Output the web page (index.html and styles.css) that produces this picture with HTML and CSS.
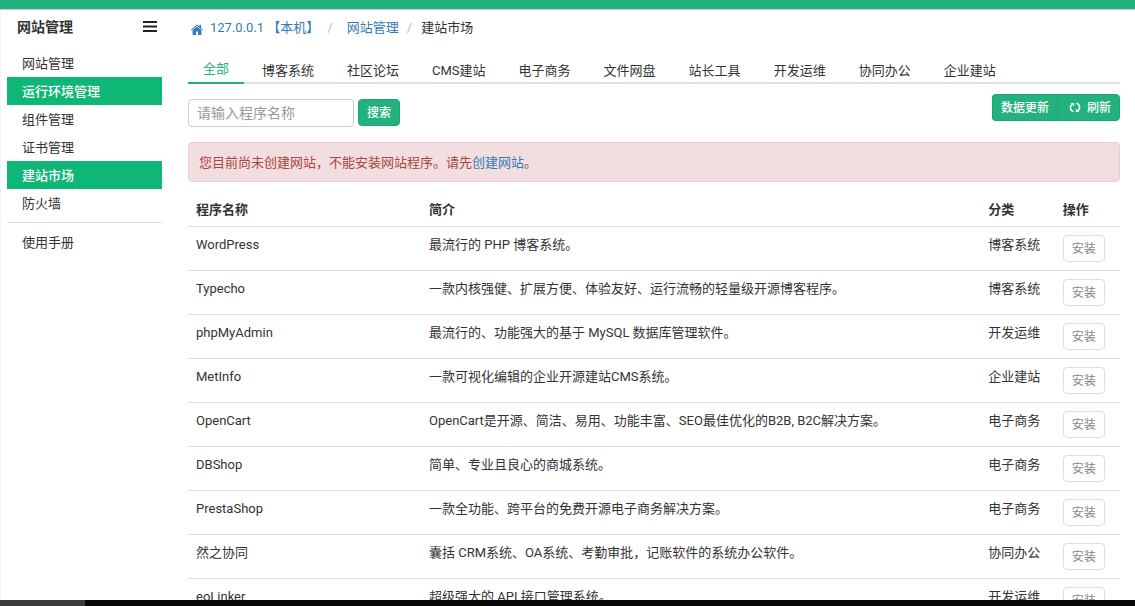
FILE: index.html
```
<!DOCTYPE html>
<html lang="zh-CN">
<head>
<meta charset="utf-8">
<title>建站市场</title>
<link rel="stylesheet" href="styles.css">
</head>
<body>
<div class="topbar"></div>
<div class="layout">
  <aside class="sidebar">
    <div class="side-head">
      <h1 class="side-title">网站管理</h1>
      <button class="menu-toggle" type="button" aria-label="菜单">
        <svg width="14" height="11" viewBox="0 0 14 11"><path d="M0 0h14v2H0zM0 4.5h14v2H0zM0 9h14v2H0z" fill="#222"/></svg>
      </button>
    </div>
    <nav class="side-nav">
      <a class="side-link" href="#">网站管理</a>
      <a class="side-link active" href="#">运行环境管理</a>
      <a class="side-link" href="#">组件管理</a>
      <a class="side-link" href="#">证书管理</a>
      <a class="side-link active" href="#">建站市场</a>
      <a class="side-link" href="#">防火墙</a>
      <hr class="side-line">
      <a class="side-link" href="#">使用手册</a>
    </nav>
  </aside>
  <main class="main">
    <nav class="breadcrumb">
      <a class="crumb-home" href="#"><svg width="12" height="11" viewBox="0 0 12 11"><path d="M6 .4 0 5.800l.6.7L6 1.700l5.400 4.800.6-.7-2-1.800V.8H8.400v1.800z" fill="#337ab7"/><path d="M6 2.400 1.600 6.300V11H5V7.600h2V11h3.400V6.300z" fill="#337ab7"/></svg>127.0.0.1 【本机】</a>
      <span class="sep">/</span>
      <a class="crumb" href="#">网站管理</a>
      <span class="sep">/</span>
      <span>建站市场</span>
    </nav>
    <nav class="tabs">
      <a class="tab active" href="#">全部</a>
      <a class="tab" href="#">博客系统</a>
      <a class="tab" href="#">社区论坛</a>
      <a class="tab" href="#">CMS建站</a>
      <a class="tab" href="#">电子商务</a>
      <a class="tab" href="#">文件网盘</a>
      <a class="tab" href="#">站长工具</a>
      <a class="tab" href="#">开发运维</a>
      <a class="tab" href="#">协同办公</a>
      <a class="tab" href="#">企业建站</a>
    </nav>
    <div class="toolbar">
      <form class="search">
        <input class="search-input" type="text" placeholder="请输入程序名称" aria-label="程序名称">
        <button class="btn" type="button">搜索</button>
      </form>
      <div class="btn-group">
        <button class="btn" type="button">数据更新</button>
        <button class="btn" type="button"><svg width="12" height="11" viewBox="0 0 12 11" fill="none" stroke="#fff" stroke-width="1.6"><path d="M4.600 9.700C1 8.800.4 4.400 3 2.400"/><path d="M7.400 1.300c3.600.9 4.200 5.300 1.600 7.300"/><path d="M1.600 1h3.600v3.400zM10.400 10H6.800V6.600z" fill="#fff" stroke="none"/></svg>刷新</button>
      </div>
    </div>
    <div class="alert">您目前尚未创建网站，不能安装网站程序。请先<a href="#">创建网站</a>。</div>
    <table class="apps">
      <thead>
        <tr><th class="c-name">程序名称</th><th class="c-desc">简介</th><th class="c-type">分类</th><th class="c-act">操作</th></tr>
      </thead>
      <tbody>
        <tr><td>WordPress</td><td>最流行的 PHP 博客系统。</td><td>博客系统</td><td class="act"><button class="install" type="button">安装</button></td></tr>
        <tr><td>Typecho</td><td>一款内核强健、扩展方便、体验友好、运行流畅的轻量级开源博客程序。</td><td>博客系统</td><td class="act"><button class="install" type="button">安装</button></td></tr>
        <tr><td>phpMyAdmin</td><td>最流行的、功能强大的基于 MySQL 数据库管理软件。</td><td>开发运维</td><td class="act"><button class="install" type="button">安装</button></td></tr>
        <tr><td>MetInfo</td><td>一款可视化编辑的企业开源建站CMS系统。</td><td>企业建站</td><td class="act"><button class="install" type="button">安装</button></td></tr>
        <tr><td>OpenCart</td><td>OpenCart是开源、简洁、易用、功能丰富、SEO最佳优化的B2B, B2C解决方案。</td><td>电子商务</td><td class="act"><button class="install" type="button">安装</button></td></tr>
        <tr><td>DBShop</td><td>简单、专业且良心的商城系统。</td><td>电子商务</td><td class="act"><button class="install" type="button">安装</button></td></tr>
        <tr><td>PrestaShop</td><td>一款全功能、跨平台的免费开源电子商务解决方案。</td><td>电子商务</td><td class="act"><button class="install" type="button">安装</button></td></tr>
        <tr><td>然之协同</td><td>囊括 CRM系统、OA系统、考勤审批，记账软件的系统办公软件。</td><td>协同办公</td><td class="act"><button class="install" type="button">安装</button></td></tr>
        <tr><td>eoLinker</td><td>超级强大的 API 接口管理系统。</td><td>开发运维</td><td class="act"><button class="install" type="button">安装</button></td></tr>
      </tbody>
    </table>
  </main>
</div>
<div class="bottombar"><div class="bottom-thumb"></div></div>
</body>
</html>
```
FILE: styles.css
```
* { box-sizing: border-box; }
body {
  margin: 0;
  height: 100vh;
  display: flex;
  flex-direction: column;
  overflow: hidden;
  background: #fff;
  color: #333;
  font: 13px/18px Roboto, "Noto Sans CJK SC", sans-serif;
}
a { color: #337ab7; text-decoration: none; }
button, input { font: inherit; }
.topbar { flex: none; height: 10px; background: #23b17e; border-bottom: 1px solid #c8cccc; }
.layout { flex: 1; min-height: 0; display: flex; overflow: hidden; }
.sidebar { flex: none; width: 163px; border-left: 1px solid #f4f4f4; padding: 0 1px 0 6px; }
.side-head { display: flex; align-items: center; justify-content: space-between; height: 34px; padding: 0 5px 0 10px; }
.side-title { margin: 0; font-size: 14px; line-height: 20px; font-weight: 600; }
.menu-toggle { display: flex; padding: 0 0 2px; border: 0; background: none; }
.side-nav { padding-top: 5px; }
.side-link { display: block; padding: 6px 15px 4px; color: #333; }
.side-link.active { background: #0fb777; color: #fff; font-weight: 500; }
.side-line { margin: 5px 0; border: 0; border-top: 1px solid #e2e2e2; }
.main { flex: 1; min-width: 0; padding: 0 15px 0 25px; }
.breadcrumb { display: flex; align-items: center; height: 36px; padding-left: 3px; white-space: nowrap; }
.crumb-home { display: flex; align-items: center; gap: 7px; }
.crumb-home svg { margin-top: 2px; }
.sep { color: #bbb; padding: 0 9px 0 8px; }
.crumb { padding-left: 5px; }
.tabs { display: flex; gap: 3px; height: 38px; border-bottom: 2px solid #e0e0e0; white-space: nowrap; }
.tab { height: 38px; padding: 16px 15px 0; color: #333; }
.tab.active { padding-top: 14px; color: #23b17e; border-bottom: 2px solid #23b17e; }
.toolbar { display: flex; justify-content: space-between; align-items: flex-start; padding-top: 10px; }
.search { display: flex; gap: 4px; padding-top: 5px; }
.search-input { width: 166px; height: 28px; padding: 0 8px; border: 1px solid #ccc; border-radius: 4px; font-size: 14px; color: #555; }
.search-input::placeholder { color: #999; opacity: 1; }
.btn { display: flex; align-items: center; gap: 6px; height: 27px; padding: 0 8px; border: 1px solid #1fa574; border-radius: 4px; background: #23b17e; color: #fff; font-size: 12px; font-weight: 500; }
.btn-group { display: flex; }
.btn-group .btn:first-child { border-radius: 4px 0 0 4px; border-right: 0; }
.btn-group .btn:last-child { border-radius: 0 4px 4px 0; padding-left: 11px; }
.alert { margin: 15px 0 8px; padding: 11px 10px 9px; border: 1px solid #ebccd1; border-radius: 4px; background: #f2dede; color: #a94442; }
.apps { width: 100%; border-collapse: collapse; table-layout: fixed; }
.apps th { padding: 11px 8px 7px; text-align: left; font-weight: 700; }
.apps td { padding: 9px 8px 8px; border-top: 1px solid #ddd; vertical-align: top; }
.apps .act { padding-top: 8px; }
.c-name { width: 25%; }
.c-desc { width: 60%; }
.c-type { width: 8%; }
.c-act { width: 7%; }
.install { display: block; height: 27px; padding: 0 8px; border: 1px solid #ddd; border-radius: 4px; background: #fff; color: #888; font-size: 12px; }
.bottombar { flex: none; height: 6px; background: #080808; }
.bottom-thumb { width: 85px; height: 6px; background: #3c3c3c; }
```
